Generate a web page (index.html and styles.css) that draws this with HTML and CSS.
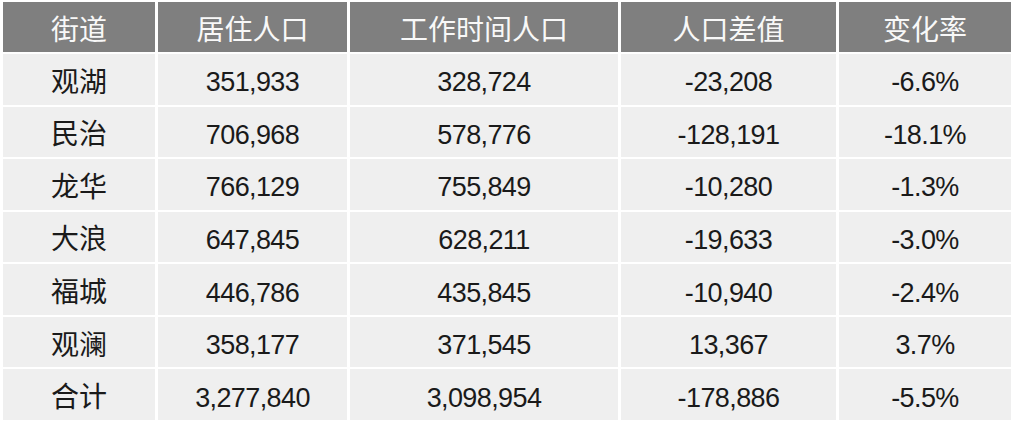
FILE: index.html
```html
<!DOCTYPE html>
<html lang="zh-CN">
<head>
<meta charset="utf-8">
<title>街道人口</title>
<link rel="stylesheet" href="styles.css">
</head>
<body>
<div class="grid">
  <div class="cell head">街道</div>
  <div class="cell head">居住人口</div>
  <div class="cell head">工作时间人口</div>
  <div class="cell head">人口差值</div>
  <div class="cell head">变化率</div>

  <div class="cell">观湖</div>
  <div class="cell num">351,933</div>
  <div class="cell num">328,724</div>
  <div class="cell num">-23,208</div>
  <div class="cell num">-6.6%</div>

  <div class="cell">民治</div>
  <div class="cell num">706,968</div>
  <div class="cell num">578,776</div>
  <div class="cell num">-128,191</div>
  <div class="cell num">-18.1%</div>

  <div class="cell">龙华</div>
  <div class="cell num">766,129</div>
  <div class="cell num">755,849</div>
  <div class="cell num">-10,280</div>
  <div class="cell num">-1.3%</div>

  <div class="cell">大浪</div>
  <div class="cell num">647,845</div>
  <div class="cell num">628,211</div>
  <div class="cell num">-19,633</div>
  <div class="cell num">-3.0%</div>

  <div class="cell">福城</div>
  <div class="cell num">446,786</div>
  <div class="cell num">435,845</div>
  <div class="cell num">-10,940</div>
  <div class="cell num">-2.4%</div>

  <div class="cell">观澜</div>
  <div class="cell num">358,177</div>
  <div class="cell num">371,545</div>
  <div class="cell num">13,367</div>
  <div class="cell num">3.7%</div>

  <div class="cell">合计</div>
  <div class="cell num">3,277,840</div>
  <div class="cell num">3,098,954</div>
  <div class="cell num">-178,886</div>
  <div class="cell num">-5.5%</div>
</div>
</body>
</html>
```
FILE: styles.css
```css
html, body {
  margin: 0;
  background: #ffffff;
}
body {
  padding: 2px 3px;
  font-family: "Liberation Sans", "Noto Sans CJK SC", sans-serif;
}
.grid {
  display: grid;
  grid-template-columns: 152px 189px 268px 215px 172px;
  grid-template-rows: 50px repeat(7, 1fr);
  column-gap: 3px;
  row-gap: 2px;
  height: 418px;
}
.cell {
  display: flex;
  align-items: center;
  justify-content: center;
  padding-top: 7px;
  box-sizing: border-box;
  background: #efefef;
  color: #1a1a1a;
  font-size: 28px;
  line-height: 1;
}
.head {
  background: #7f7f7f;
  color: #f8f8f8;
  font-weight: 400;
}
.num {
  font-size: 27px;
  letter-spacing: -0.6px;
}
```
